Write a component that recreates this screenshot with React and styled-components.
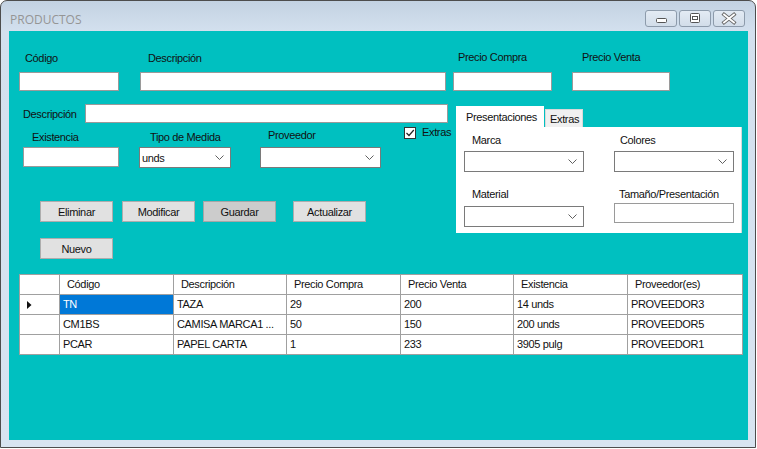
import React from 'react';
import styled, { createGlobalStyle } from 'styled-components';

const Global = createGlobalStyle`
  html, body {
    margin: 0;
    padding: 0;
    background: #ffffff;
  }
  * {
    box-sizing: border-box;
  }
`;

const Window = styled.div`
  width: 756px;
  height: 448px;
  border: 1px solid #4d4d4d;
  border-radius: 7px 7px 0 0;
  background: linear-gradient(to bottom, #c3d2e2 0, #d3e0ee 30px, #d8e4f1 100%);
  display: flex;
  flex-direction: column;
  font-family: 'Liberation Sans', Arial, sans-serif;
  font-size: 11px;
  letter-spacing: -0.35px;
  color: #111;
`;

const TitleBar = styled.div`
  height: 30px;
  display: flex;
  align-items: flex-start;
  padding-left: 9px;
  padding-right: 10px;
`;

const Title = styled.div`
  font-family: 'Open Sans', sans-serif;
  font-size: 12px;
  letter-spacing: 0;
  line-height: 16px;
  margin-top: 11px;
  color: #959595;
  flex: 1;
`;

const CaptionButtons = styled.div`
  display: flex;
  gap: 2px;
  margin-top: 9px;
`;

const CaptionButton = styled.div`
  width: 32px;
  height: 17px;
  border: 1px solid #8d9bab;
  border-radius: 3px;
  background: linear-gradient(to bottom, #e3ebf4, #d2dde9);
  display: flex;
  align-items: center;
  justify-content: center;
  svg {
    display: block;
  }
`;

const Client = styled.div`
  margin: 0 7px 0 8px;
  height: 409px;
  background: #00c0c0;
`;

const RowA = styled.div`
  display: flex;
  padding-top: 21px;
`;

const Field = styled.div`
  display: flex;
  flex-direction: column;
  width: ${({ $w }) => $w}px;
  margin-left: ${({ $ml }) => $ml || 0}px;
  gap: ${({ $gap }) => ($gap === undefined ? 7 : $gap)}px;
`;

const Label = styled.span`
  display: block;
  line-height: 13px;
  white-space: nowrap;
  padding-left: ${({ $pl }) => $pl || 0}px;
  margin-top: ${({ $mt }) => $mt || 0}px;
`;

const TextBox = styled.div`
  width: 100%;
  height: ${({ $h }) => $h || 19}px;
  background: #fff;
  border: 1px solid #9a9a9a;
`;

const ComboBox = styled.div`
  width: 100%;
  height: 21px;
  background: #fff;
  border: 1px solid #7a7a7a;
  display: flex;
  align-items: center;
  justify-content: space-between;
  padding: 0 6px 0 2px;
  svg {
    display: block;
  }
`;

const Middle = styled.div`
  display: flex;
  margin-top: 13px;
`;

const LeftCol = styled.div`
  width: 447px;
`;

const RowB = styled.div`
  display: flex;
  align-items: center;
  height: 19px;
  padding-left: 14px;
`;

const InlineLabel = styled.span`
  width: 62px;
  white-space: nowrap;
`;

const RowC = styled.div`
  display: flex;
  align-items: flex-start;
  padding-top: 8px;
`;

const CheckLabel = styled.label`
  display: flex;
  align-items: center;
  gap: 6px;
  margin-left: 23px;
  margin-top: -5px;
  line-height: 13px;
`;

const CheckBox = styled.span`
  width: 12px;
  height: 12px;
  background: #fff;
  border: 1px solid #333;
  display: flex;
  align-items: center;
  justify-content: center;
`;

const ButtonRow = styled.div`
  display: flex;
  padding-left: 31px;
  margin-top: ${({ $mt }) => $mt}px;
`;

const Btn = styled.div`
  width: 73px;
  height: 21px;
  margin-left: ${({ $ml }) => $ml || 0}px;
  display: flex;
  align-items: center;
  justify-content: center;
  background: ${({ $hot }) => ($hot ? '#cccccc' : '#e1e1e1')};
  border: 1px solid ${({ $hot }) => ($hot ? '#a6a6a6' : '#adadad')};
`;

const TabControl = styled.div`
  width: 286px;
  margin-top: 2px;
`;

const TabStrip = styled.div`
  display: flex;
  align-items: flex-end;
  height: 21px;
  gap: 1px;
`;

const Tab = styled.div`
  width: ${({ $w }) => $w}px;
  height: ${({ $active }) => ($active ? 21 : 18)}px;
  padding-left: ${({ $active }) => ($active ? 9 : 4)}px;
  padding-top: ${({ $active }) => ($active ? 4 : 3)}px;
  line-height: 13px;
  background: ${({ $active }) => ($active ? '#ffffff' : '#f0f0f0')};
  border: 1px solid ${({ $active }) => ($active ? '#ffffff' : '#d9d9d9')};
  border-bottom: none;
`;

const TabPage = styled.div`
  height: 106px;
  background: #fff;
  border-right: 1px solid #d9d9d9;
  padding: 7px 0 0 8px;
  display: grid;
  grid-template-columns: 120px 120px;
  column-gap: 30px;
  row-gap: 16px;
  align-content: start;
`;

const GridWrap = styled.div`
  margin: 15px 0 0 10px;
  width: 723px;
`;

const Table = styled.table`
  width: 723px;
  border-collapse: collapse;
  table-layout: fixed;
  background: #fff;
`;

const Tr = styled.tr`
  height: 20px;
`;

const Th = styled.th`
  font-weight: normal;
  text-align: left;
  padding: 0 0 0 7px;
  border: 1px solid #a0a0a0;
  line-height: 13px;
  white-space: nowrap;
`;

const Td = styled.td`
  padding: 0 3px;
  border: 1px solid #a0a0a0;
  line-height: 13px;
  white-space: nowrap;
  overflow: hidden;
  background: ${({ $sel }) => ($sel ? '#0078d7' : '#fff')};
  color: ${({ $sel }) => ($sel ? '#fff' : '#111')};
`;

const RowHead = styled.td`
  padding: 0 0 0 7px;
  border: 1px solid #a0a0a0;
  svg {
    display: block;
  }
`;

const Chevron = () => (
  <svg width="9" height="5" viewBox="0 0 9 5">
    <polyline points="0.5,0.5 4.5,4.5 8.5,0.5" fill="none" stroke="#606060" strokeWidth="1" />
  </svg>
);

const Combo = ({ value }) => (
  <ComboBox>
    <span>{value}</span>
    <Chevron />
  </ComboBox>
);

const columns = [40, 114, 113, 114, 113, 114, 115];
const headers = ['Código', 'Descripción', 'Precio Compra', 'Precio Venta', 'Existencia', 'Proveedor(es)'];
const rows = [
  ['TN', 'TAZA', '29', '200', '14 unds', 'PROVEEDOR3'],
  ['CM1BS', 'CAMISA MARCA1 ...', '50', '150', '200 unds', 'PROVEEDOR5'],
  ['PCAR', 'PAPEL CARTA', '1', '233', '3905 pulg', 'PROVEEDOR1'],
];

export default function App() {
  return (
    <>
      <Global />
      <Window>
        <TitleBar>
          <Title>PRODUCTOS</Title>
          <CaptionButtons>
            <CaptionButton>
              <svg width="30" height="15" viewBox="0 0 30 15">
                <rect x="10.5" y="7.5" width="10" height="4" rx="1" fill="#fff" stroke="#555" />
              </svg>
            </CaptionButton>
            <CaptionButton>
              <svg width="30" height="15" viewBox="0 0 30 15">
                <rect x="10.5" y="2.5" width="9" height="9" rx="1" fill="#fff" stroke="#555" />
                <rect x="12.5" y="5.5" width="5" height="3" fill="#fff" stroke="#555" />
              </svg>
            </CaptionButton>
            <CaptionButton>
              <svg width="30" height="15" viewBox="0 0 30 15">
                <g strokeLinecap="square">
                  <line x1="10" y1="3.5" x2="20" y2="11.5" stroke="#666" strokeWidth="3.6" />
                  <line x1="20" y1="3.5" x2="10" y2="11.5" stroke="#666" strokeWidth="3.6" />
                  <line x1="10" y1="3.5" x2="20" y2="11.5" stroke="#fff" strokeWidth="1.8" />
                  <line x1="20" y1="3.5" x2="10" y2="11.5" stroke="#fff" strokeWidth="1.8" />
                </g>
              </svg>
            </CaptionButton>
          </CaptionButtons>
        </TitleBar>

        <Client>
          <RowA>
            <Field $w={100} $ml={10}>
              <Label $pl={6}>Código</Label>
              <TextBox />
            </Field>
            <Field $w={306} $ml={21}>
              <Label $pl={8}>Descripción</Label>
              <TextBox />
            </Field>
            <Field $w={99} $ml={7}>
              <Label $pl={5} $mt={-1}>Precio Compra</Label>
              <TextBox style={{ marginTop: 1 }} />
            </Field>
            <Field $w={98} $ml={20}>
              <Label $pl={10} $mt={-1}>Precio Venta</Label>
              <TextBox style={{ marginTop: 1 }} />
            </Field>
          </RowA>

          <Middle>
            <LeftCol>
              <RowB>
                <InlineLabel>Descripción</InlineLabel>
                <TextBox style={{ width: 363 }} />
              </RowB>

              <RowC>
                <Field $w={96} $ml={14} $gap={3}>
                  <Label $pl={9}>Existencia</Label>
                  <TextBox $h={20} />
                </Field>
                <Field $w={92} $ml={20} $gap={3}>
                  <Label $pl={11}>Tipo de Medida</Label>
                  <Combo value="unds" />
                </Field>
                <Field $w={121} $ml={29} $gap={5}>
                  <Label $pl={8} $mt={-2}>Proveedor</Label>
                  <Combo value="" />
                </Field>
                <CheckLabel>
                  <CheckBox>
                    <svg width="10" height="10" viewBox="0 0 10 10">
                      <polyline points="1.5,5 4,7.5 8.8,2" fill="none" stroke="#222" strokeWidth="1.2" />
                    </svg>
                  </CheckBox>
                  Extras
                </CheckLabel>
              </RowC>

              <ButtonRow $mt={33}>
                <Btn>Eliminar</Btn>
                <Btn $ml={9}>Modificar</Btn>
                <Btn $ml={8} $hot>Guardar</Btn>
                <Btn $ml={17}>Actualizar</Btn>
              </ButtonRow>
              <ButtonRow $mt={16}>
                <Btn>Nuevo</Btn>
              </ButtonRow>
            </LeftCol>

            <TabControl>
              <TabStrip>
                <Tab $w={88} $active>Presentaciones</Tab>
                <Tab $w={38}>Extras</Tab>
              </TabStrip>
              <TabPage>
                <Field $w={120} $gap={4}>
                  <Label $pl={8}>Marca</Label>
                  <Combo value="" />
                </Field>
                <Field $w={120} $gap={4}>
                  <Label $pl={6}>Colores</Label>
                  <Combo value="" />
                </Field>
                <Field $w={120} $gap={5}>
                  <Label $pl={8}>Material</Label>
                  <Combo value="" />
                </Field>
                <Field $w={120} $gap={2}>
                  <Label $pl={5}>Tamaño/Presentación</Label>
                  <TextBox $h={20} />
                </Field>
              </TabPage>
            </TabControl>
          </Middle>

          <GridWrap>
            <Table>
              <colgroup>
                {columns.map((w, i) => (
                  <col key={i} style={{ width: w }} />
                ))}
              </colgroup>
              <thead>
                <Tr>
                  <Th />
                  {headers.map((h) => (
                    <Th key={h}>{h}</Th>
                  ))}
                </Tr>
              </thead>
              <tbody>
                {rows.map((r, ri) => (
                  <Tr key={r[0]}>
                    <RowHead>
                      {ri === 0 && (
                        <svg width="5" height="8" viewBox="0 0 5 8">
                          <polygon points="0,0 4.5,4 0,8" fill="#111" />
                        </svg>
                      )}
                    </RowHead>
                    {r.map((c, ci) => (
                      <Td key={ci} $sel={ri === 0 && ci === 0}>{c}</Td>
                    ))}
                  </Tr>
                ))}
              </tbody>
            </Table>
          </GridWrap>
        </Client>
      </Window>
    </>
  );
}
